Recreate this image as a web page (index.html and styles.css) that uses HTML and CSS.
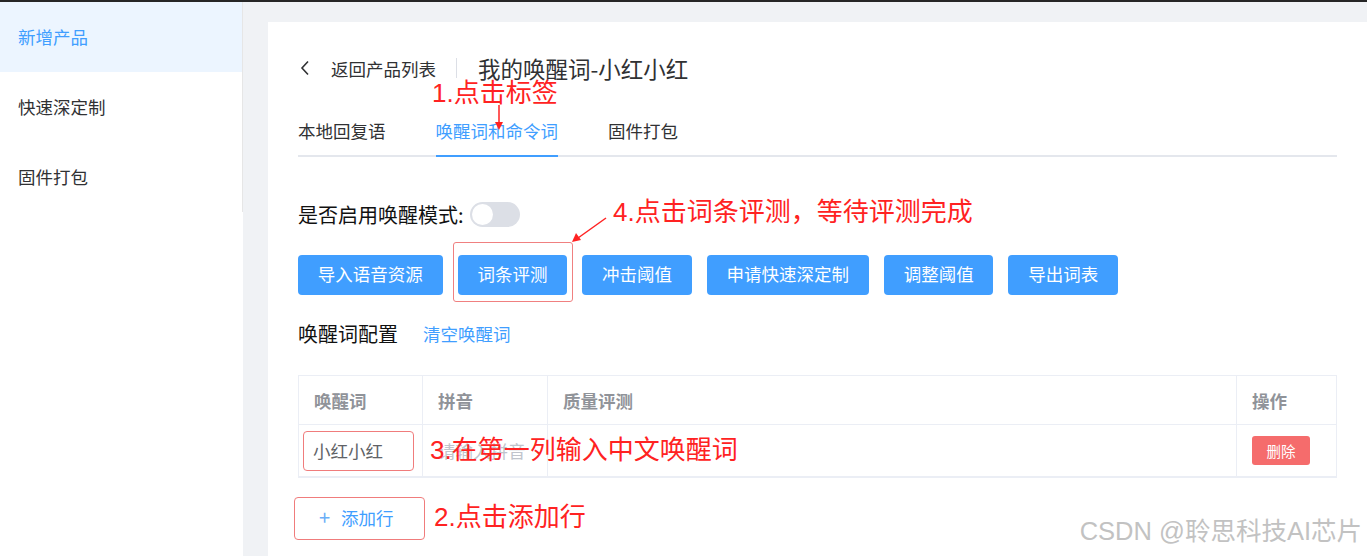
FILE: index.html
```html
<!DOCTYPE html>
<html lang="zh-CN">
<head>
  <meta charset="UTF-8">
  <title>我的唤醒词-小红小红</title>
  <link rel="stylesheet" href="styles.css">
</head>
<body>

<div class="topstrip"></div>

<div class="layout">
  <aside class="sidebar">
    <ul class="menu">
      <li class="menu-item active">新增产品</li>
      <li class="menu-item">快速深定制</li>
      <li class="menu-item">固件打包</li>
    </ul>
  </aside>

  <main class="main">
    <div class="card">
      <div class="page-header">
        <span class="back">
          <svg width="10" height="16" viewBox="0 0 10 16"><path d="M8 1.5 L2 8 L8 14.5" fill="none" stroke="#303133" stroke-width="1.6"/></svg>
          <span class="back-text">返回产品列表</span>
        </span>
        <span class="divider"></span>
        <span class="title">我的唤醒词-小红小红</span>
      </div>

      <div class="tabs">
        <div class="tab">本地回复语</div>
        <div class="tab active">唤醒词和命令词</div>
        <div class="tab">固件打包</div>
      </div>

      <div class="switch-row">
        <span class="label">是否启用唤醒模式:</span>
        <span class="switch"><span class="knob"></span></span>
      </div>

      <div class="btn-row">
        <button class="btn">导入语音资源</button>
        <button class="btn">词条评测</button>
        <button class="btn">冲击阈值</button>
        <button class="btn">申请快速深定制</button>
        <button class="btn">调整阈值</button>
        <button class="btn">导出词表</button>
      </div>

      <div class="config-row">
        <span class="config-title">唤醒词配置</span>
        <a class="link">清空唤醒词</a>
      </div>

      <table class="words">
        <colgroup>
          <col style="width:124px"><col style="width:125px"><col><col style="width:100px">
        </colgroup>
        <thead>
          <tr><th>唤醒词</th><th>拼音</th><th>质量评测</th><th>操作</th></tr>
        </thead>
        <tbody>
          <tr>
            <td class="cell-input"><input class="word-input" value="小红小红"></td>
            <td><span class="placeholder">请输入拼音</span></td>
            <td></td>
            <td><button class="del-btn">删除</button></td>
          </tr>
        </tbody>
      </table>

      <button class="add-row"><span class="plus">+</span>添加行</button>
    </div>
  </main>
</div>

<!-- annotations drawn over the screenshot -->
<div class="note note-1">1.点击标签</div>
<svg class="arrow arrow-1" width="12" height="26" viewBox="0 0 12 26"><path d="M6 0 V20" stroke="#f22" stroke-width="1.5"/><path d="M2 17 L6 25 L10 17 Z" fill="#f22"/></svg>
<div class="note note-4">4.点击词条评测，等待评测完成</div>
<svg class="arrow arrow-4" width="40" height="30" viewBox="0 0 40 30"><path d="M36 4 L8 24" stroke="#f22" stroke-width="1.5"/><path d="M2 28 L6 19 L11 26 Z" fill="#f22"/></svg>
<div class="mark mark-4"></div>
<div class="note note-3">3.在第一列输入中文唤醒词</div>
<div class="note note-2">2.点击添加行</div>
<div class="watermark">CSDN @聆思科技AI芯片</div>

</body>
</html>
```

FILE: styles.css
```css
body { margin: 0; font-family: "Noto Sans CJK SC", "Liberation Sans", sans-serif; font-size: 17.5px; color: #303133; background: #fff; overflow: hidden; height: 556px; position: relative; }
.topstrip { height: 2px; background: #262626; }
.layout { display: flex; height: 554px; }

.sidebar { width: 243px; background: #fff; flex-shrink: 0; }
.menu { list-style: none; margin: 0; padding: 0; width: 242px; border-right: 1px solid #e6e6e6; }
.menu-item { height: 70px; line-height: 70px; padding-left: 18px; color: #303133; }
.menu-item.active { background: #ecf5ff; color: #409eff; }

.main { flex: 1; background: #f0f2f5; padding: 20px 0 0 25px; }
.card { background: #fff; height: 100%; padding: 30px 30px 0 30px; box-sizing: border-box; }

.page-header { display: flex; align-items: center; height: 32px; }
.back { display: flex; align-items: center; }
.back svg { margin-left: 2px; margin-right: 21px; }
.back-text { color: #303133; }
.divider { width: 1px; height: 20px; background: #dcdfe6; margin: 0 21px 0 20px; }
.title { font-size: 22.5px; color: #303133; }

.tabs { display: flex; height: 49px; margin-top: 22px; border-bottom: 2px solid #e4e7ed; }
.tab { padding: 0 25px; line-height: 50px; color: #303133; position: relative; }
.tab:first-child { padding-left: 0; }
.tab.active { color: #409eff; }
.tab.active::after { content: ""; position: absolute; left: 25px; right: 25px; bottom: -2px; height: 2.5px; background: #409eff; }

.switch-row { display: flex; align-items: center; height: 35px; margin-top: 40px; }
.label { color: #111; font-size: 20px; margin-right: 6px; }
.switch { width: 50px; height: 25px; border-radius: 13px; background: #dcdfe6; position: relative; }
.knob { position: absolute; left: 2px; top: 2px; width: 21px; height: 21px; border-radius: 50%; background: #fff; }

.btn-row { display: flex; gap: 15px; margin-top: 23px; }
.btn { height: 40px; padding: 0 19.8px 3px; border: none; border-radius: 4px; background: #409eff; color: #fff; font-family: inherit; font-size: 17.5px; }

.config-row { display: flex; align-items: center; height: 30px; margin-top: 23px; }
.config-title { color: #111; font-size: 20px; margin-right: 25px; }
.link { color: #409eff; }

.words { width: 100%; table-layout: fixed; border-collapse: collapse; margin-top: 27px; border: 1px solid #ebeef5; border-bottom: 2px solid #ebeef5; }
.words th, .words td { border: 1px solid #ebeef5; text-align: left; padding: 0 15px; }
.words th { height: 48px; color: #909399; font-weight: bold; }
.words td { height: 51px; }
.words td.cell-input { padding: 0 4px; }
.word-input { width: 111px; height: 40px; box-sizing: border-box; border: 1px solid #f07c7c; border-radius: 4px; padding: 0 9px; font-family: inherit; font-size: 17.5px; color: #606266; outline: none; display: block; }
.placeholder { color: #c0c4cc; }
.del-btn { width: 58px; height: 29px; border: none; border-radius: 3px; background: #f56c6c; color: #fff; font-family: inherit; font-size: 14.5px; display: block; }

.add-row { display: block; margin: 19px 0 0 -4px; width: 131px; height: 43px; border: 1px solid #f07c7c; border-radius: 4px; background: #fff; color: #409eff; font-family: inherit; font-size: 17.5px; padding: 0 0 5px 24px; text-align: left; }
.plus { font-size: 20px; margin-right: 11px; color: #6aaef7; }

.note { position: absolute; color: #f22; font-size: 26px; line-height: 30px; font-family: "Liberation Sans", "Noto Sans CJK SC", sans-serif; white-space: nowrap; }
.note-1 { left: 432px; top: 78px; }
.note-4 { left: 613px; top: 197px; }
.note-3 { left: 430px; top: 435px; }
.note-2 { left: 434px; top: 502px; }
.arrow { position: absolute; }
.arrow-1 { left: 493px; top: 105px; }
.arrow-4 { left: 570px; top: 214px; }
.mark { position: absolute; border: 1px solid #f08080; border-radius: 3px; }
.mark-4 { left: 453px; top: 242px; width: 118px; height: 58px; }
.watermark { position: absolute; right: 5px; top: 514px; font-size: 25.5px; line-height: 34px; color: #c2c2c2; text-shadow: 1px 1px 0 #fff, -1px -1px 0 #fff; font-family: "Liberation Sans", "Noto Sans CJK SC", sans-serif; }
```
